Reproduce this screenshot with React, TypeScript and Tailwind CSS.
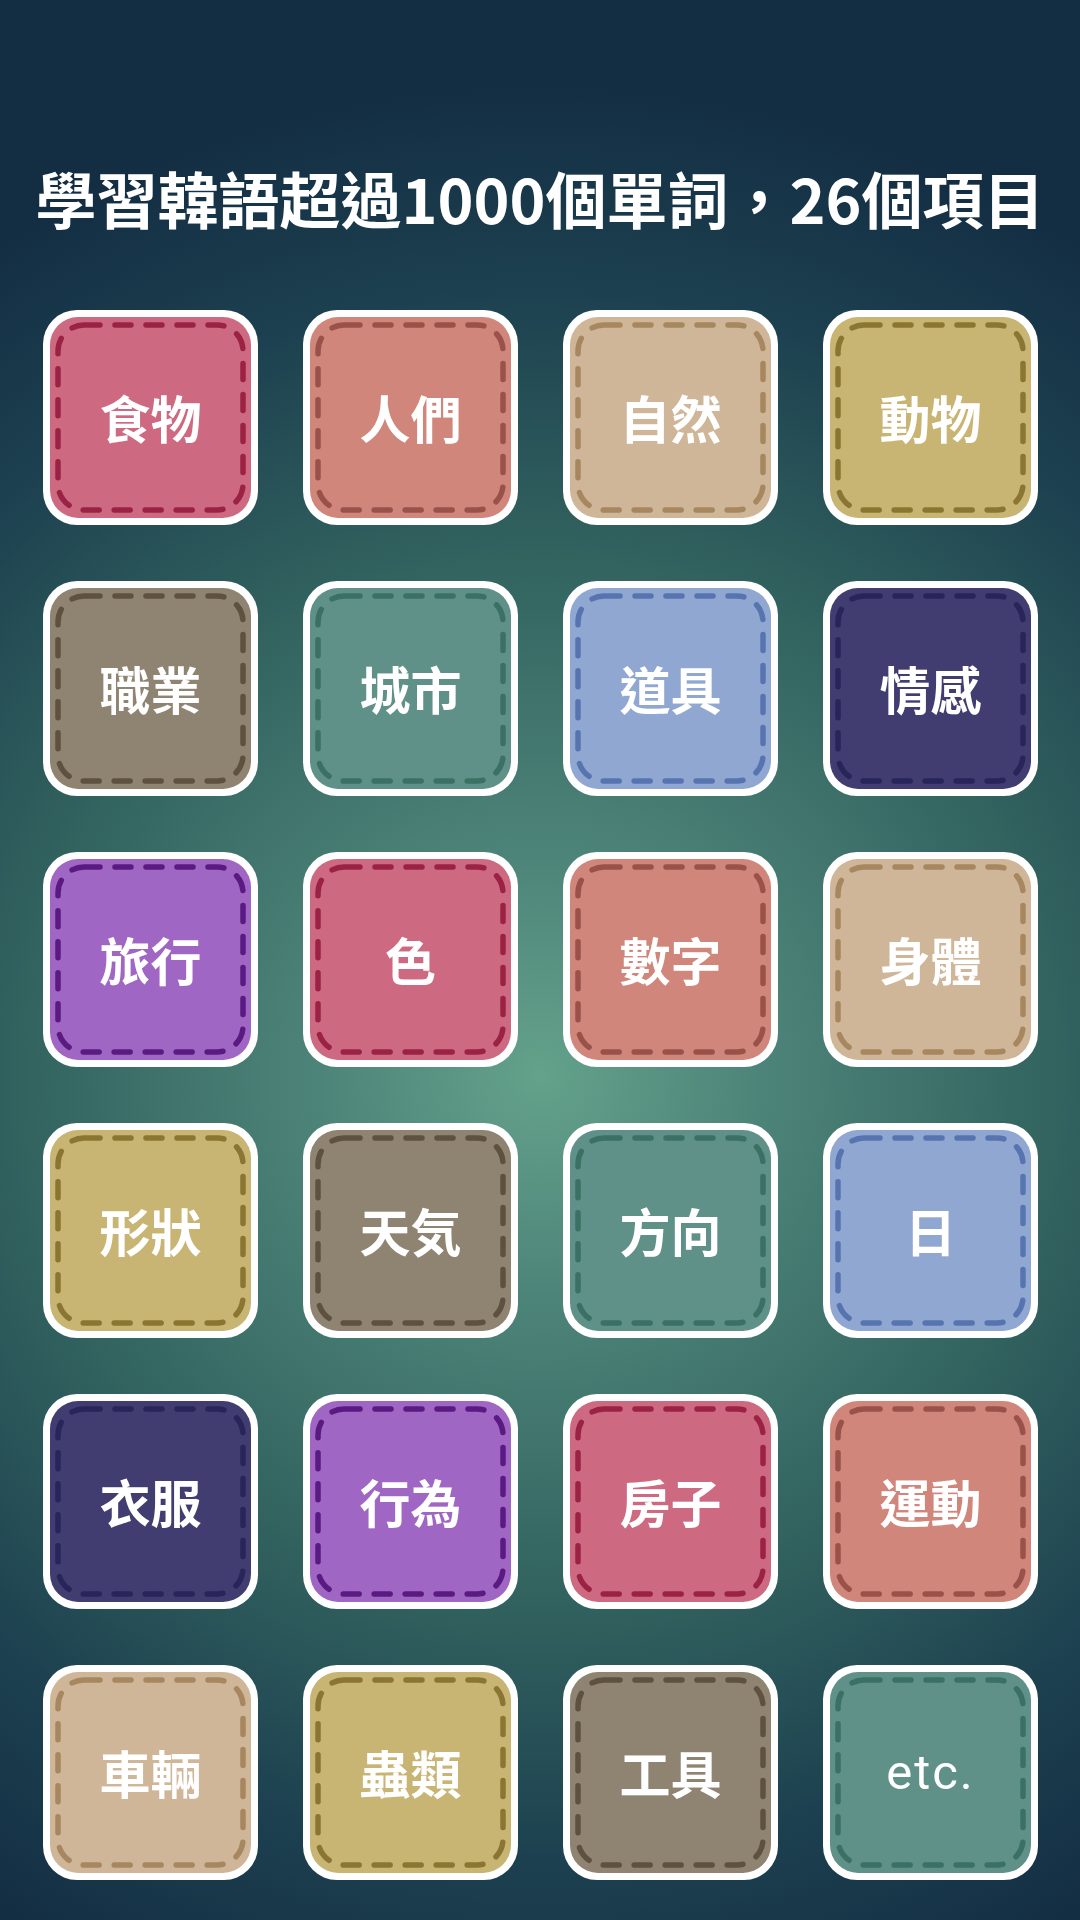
const palette = [
  { bg: "bg-[#cd6a81]", dash: "#9a2345" },
  { bg: "bg-[#d0867a]", dash: "#98524a" },
  { bg: "bg-[#d0b698]", dash: "#a6875f" },
  { bg: "bg-[#c8b473]", dash: "#8a7632" },
  { bg: "bg-[#8f8371]", dash: "#5e5140" },
  { bg: "bg-[#609189]", dash: "#3b7064" },
  { bg: "bg-[#90a7d1]", dash: "#5874b0" },
  { bg: "bg-[#413d70]", dash: "#27255a" },
  { bg: "bg-[#a066c4]", dash: "#5a1a82" },
];

const topics = [
  "食物", "人們", "自然", "動物",
  "職業", "城市", "道具", "情感",
  "旅行", "色", "數字", "身體",
  "形狀", "天気", "方向", "日",
  "衣服", "行為", "房子", "運動",
  "車輛", "蟲類", "工具", "etc.",
];

const Stitch = ({ color }: { color: string }) => (
  <svg className="absolute inset-0 h-full w-full" viewBox="0 0 201 201">
    <rect
      x="8"
      y="8"
      width="185"
      height="185"
      rx="26"
      fill="none"
      stroke={color}
      strokeWidth="5.5"
      strokeDasharray="16 15"
      strokeLinecap="round"
    />
  </svg>
);

const Tile = ({ label, index }: { label: string; index: number }) => {
  const c = palette[index % palette.length];
  const latin = label === "etc.";
  return (
    <div className="h-[215px] w-[215px] rounded-[34px] bg-white p-[7px]">
      <div className={`relative flex h-full w-full items-center justify-center rounded-[28px] ${c.bg}`}>
        <Stitch color={c.dash} />
        <span
          className={
            latin
              ? "relative font-['Roboto',sans-serif] text-[49px] font-normal tracking-[2px] text-white"
              : "relative font-['Noto_Sans_CJK_TC',sans-serif] text-[51px] font-bold text-white"
          }
        >
          {label}
        </span>
      </div>
    </div>
  );
};

export default function App() {
  return (
    <div className="min-h-[1920px] w-[1080px] bg-[radial-gradient(circle_at_50%_56%,#64a28b_0px,#4d8479_220px,#32635f_520px,#1d4150_780px,#132d43_1000px)] pt-[158px]">
      <h1 className="h-[80px] text-center font-['Noto_Sans_CJK_TC',sans-serif] text-[61px] font-bold leading-[80px] text-white">
        學習韓語超過1000個單詞，26個項目
      </h1>
      <div className="mt-[72px] grid grid-cols-[repeat(4,215px)] gap-x-[45px] gap-y-[56px] px-[43px]">
        {topics.map((t, i) => (
          <Tile key={t} label={t} index={i} />
        ))}
      </div>
    </div>
  );
}
